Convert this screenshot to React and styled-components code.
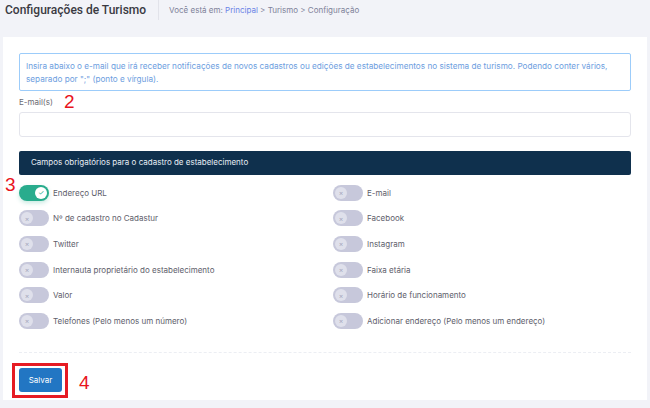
import React, {useState} from "react";
import styled, {createGlobalStyle} from "styled-components";

const GlobalStyle = createGlobalStyle`
  html, body {
    margin: 0;
    padding: 0;
    background: #f2f3f8;
    font-family: Inter, "Noto Sans", sans-serif;
  }
`;

export const Page = styled.div`
  width: 650px;
  height: 408px;
  overflow: hidden;
  position: relative;
`;

export const TopBar = styled.div`
  display: flex;
  align-items: center;
  height: 20px;
  padding: 0 0 0 5px;
`;

export const PageTitle = styled.h1`
  margin: 0;
  font-family: Roboto, "Liberation Sans", Arial, sans-serif;
  font-size: 12px;
  font-weight: 500;
  color: #3a3a42;
  padding-right: 12px;
  border-right: 1px solid #e2e3ea;
  line-height: 20px;
`;

export const Crumbs = styled.div`
  font-size: 8px;
  color: #7e8299;
  margin-left: 10px;
  a { color: #6b83e6; text-decoration: none; }
`;

export const Card = styled.div`
  background: #fff;
  margin: 17px 3px 0 3px;
  height: 363px;
  padding: 16px 16px 0 16px;
  box-sizing: border-box;
`;

export const InfoBox = styled.div`
  border: 1px solid #9cccfa;
  border-radius: 2px;
  padding: 6px 4px 5px 6px;
  font-size: 8.2px;
  line-height: 12.5px;
  color: #6d9ee0;
`;

export const Label = styled.div`
  font-size: 8px;
  color: #6b6b73;
  margin: 5px 0 4px 0;
  height: 12px;
  line-height: 12px;
`;

export const Input = styled.input`
  display: block;
  width: 100%;
  box-sizing: border-box;
  height: 25px;
  border: 1px solid #e4e5ec;
  border-radius: 3px;
  outline: none;
`;

export const Band = styled.div`
  margin-top: 14px;
  background: #0f304d;
  color: #e8eef5;
  font-size: 8px;
  height: 24px;
  line-height: 22px;
  border-radius: 2px;
  padding: 0 12px;
`;

export const Grid = styled.div`
  display: grid;
  grid-template-columns: 314px 1fr;
  grid-auto-rows: 25.6px;
  margin-top: 5px;
`;

export const ToggleRow = styled.label`
  display: flex;
  align-items: center;
  gap: 4px;
  font-size: 8px;
  color: #60606b;
  cursor: pointer;
`;

export const Track = styled.span`
  position: relative;
  width: 30px;
  height: 16px;
  border-radius: 8px;
  flex-shrink: 0;
  background: ${p => (p.$on ? "#29ac8d" : "#c7c8db")};
  box-shadow: ${p => (p.$on ? "0 2px 4px rgba(41,172,141,0.25)" : "none")};
`;

export const Knob = styled.span`
  position: absolute;
  top: 2px;
  left: ${p => (p.$on ? "16px" : "2px")};
  width: 12px;
  height: 12px;
  border-radius: 50%;
  background: ${p => (p.$on ? "#fff" : "#dfe0eb")};
  display: flex;
  align-items: center;
  justify-content: center;
  font-size: 7px;
  color: ${p => (p.$on ? "#29ac8d" : "#a6a8bd")};
  line-height: 1;
`;

export const Divider = styled.div`
  margin-top: 18px;
  border-top: 1px dashed #eceef3;
`;

export const Footer = styled.div`
  display: flex;
  align-items: center;
  padding-top: 10px;
  margin-left: -7px;
`;

export const Highlight = styled.span`
  display: inline-flex;
  border: 3px solid #e61b23;
  padding: 2px 3px 3px 4px;
`;

export const SaveButton = styled.button`
  width: 43px;
  height: 24px;
  border: none;
  border-radius: 3px;
  background: #2276c3;
  color: #fff;
  font-family: Inter, "Noto Sans", sans-serif;
  font-size: 8px;
  cursor: pointer;
`;

export const Mark = styled.span`
  position: absolute;
  color: #e8141c;
  font-family: "Liberation Sans", Arial, sans-serif;
  font-size: 19px;
  line-height: 1;
`;

const fields = [
    ["Endereço URL", "E-mail"],
    ["Nº de cadastro no Cadastur", "Facebook"],
    ["Twitter", "Instagram"],
    ["Internauta proprietário do estabelecimento", "Faixa etária"],
    ["Valor", "Horário de funcionamento"],
    ["Telefones (Pelo menos um número)", "Adicionar endereço (Pelo menos um endereço)"],
];

const Toggle = ({label, initial}) => {
    const [on, setOn] = useState(initial);
    return (
        <ToggleRow onClick={() => setOn(!on)}>
            <Track $on={on}>
                <Knob $on={on}>{on ? "✓" : "×"}</Knob>
            </Track>
            {label}
        </ToggleRow>
    );
};

const App = () => {
    return (<>
        <GlobalStyle/>
        <Page>
            <TopBar>
                <PageTitle>Configurações de Turismo</PageTitle>
                <Crumbs>Você está em: <a href="#">Principal</a> &gt; Turismo &gt; Configuração</Crumbs>
            </TopBar>
            <Card>
                <InfoBox>
                    Insira abaixo o e-mail que irá receber notificações de novos cadastros ou edições de estabelecimentos no sistema de turismo. Podendo conter vários, separado por ";" (ponto e vírgula).
                </InfoBox>
                <Label>E-mail(s)</Label>
                <Input type="text"/>
                <Band>Campos obrigatórios para o cadastro de estabelecimento</Band>
                <Grid>
                    {fields.map((pair, i) => pair.map((f, j) =>
                        <Toggle key={f} label={f} initial={i === 0 && j === 0}/>
                    ))}
                </Grid>
                <Divider/>
                <Footer>
                    <Highlight>
                        <SaveButton>Salvar</SaveButton>
                    </Highlight>
                </Footer>
            </Card>
            <Mark style={{left: 64, top: 92}}>2</Mark>
            <Mark style={{left: 5, top: 175}}>3</Mark>
            <Mark style={{left: 79, top: 373}}>4</Mark>
        </Page>
    </>);
};

export default App;
